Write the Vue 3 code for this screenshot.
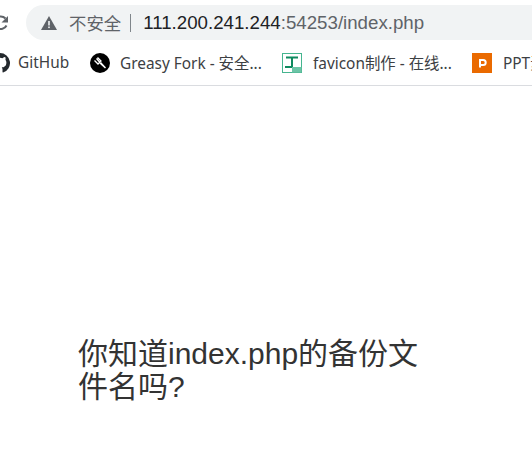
<template>
  <div class="page">
    <div class="toolbar">
      <svg class="reload" width="10" height="18" viewBox="0 0 10 18"><path d="M5.500 4.500A6.300 6.300 0 1 0 6.500 11.500" fill="none" stroke="#5f6368" stroke-width="2"/><path d="M8 2v6.500H1.500z" fill="#5f6368"/></svg>
      <div class="omnibox">
        <svg class="warn" width="16" height="14" viewBox="0 0 16 14"><path d="M8 0 16 14H0z" fill="#5f6368"/><rect x="7.200" y="5" width="1.600" height="4.500" fill="#f1f3f4"/><rect x="7.200" y="10.500" width="1.600" height="1.600" fill="#f1f3f4"/></svg>
        <span class="insecure">不安全</span>
        <span class="sep"></span>
        <span class="url"><span class="host">111.200.241.244</span>:54253/index.php</span>
      </div>
    </div>
    <div class="bookmarks">
      <div class="mark github">
        <svg width="20" height="20" viewBox="0 0 16 16"><path d="M8 0a8 8 0 0 0-2.500 15.600c.4.100.5-.2.5-.4v-1.400c-2.200.5-2.700-1-2.700-1-.4-.9-.9-1.200-.9-1.200-.7-.5.100-.5.100-.5.800.100 1.200.8 1.200.8.700 1.200 1.900.9 2.300.7.100-.5.300-.9.500-1.100-1.800-.2-3.600-.9-3.600-4 0-.9.300-1.600.8-2.100-.1-.2-.4-1 .1-2.100 0 0 .7-.2 2.200.8a7.600 7.600 0 0 1 4 0c1.500-1 2.200-.8 2.200-.8.500 1.100.2 1.900.1 2.100.5.500.8 1.200.8 2.100 0 3.100-1.900 3.800-3.700 4 .3.300.6.800.6 1.500v2.200c0 .2.100.5.500.4A8 8 0 0 0 8 0z" fill="#24292e"/></svg>
        <span>GitHub</span>
      </div>
      <div class="mark fork">
        <svg width="20" height="20" viewBox="0 0 20 20"><circle cx="10" cy="10" r="10" fill="#000"/><path d="M9.500 10.500l1.500-1.500 5 5.500-1 1z" fill="#fff"/><path d="M4.500 7.500l3.500 3.500 3-3-3.500-3.500M6.500 5.500l3 3.500" fill="none" stroke="#fff" stroke-width="1.300"/></svg>
        <span>Greasy Fork - 安全...</span>
      </div>
      <div class="mark favicon">
        <svg width="20" height="20" viewBox="0 0 20 20"><rect x=".5" y=".5" width="19" height="19" fill="#fff" stroke="#45b58f"/><path d="M4 4.500h12M10 4.500v9.500M3 14h8" stroke="#0f8a5f" stroke-width="2" fill="none"/><rect x="10" y="14" width="9.500" height="5.500" fill="#6cc4a6"/></svg>
        <span>favicon制作 - 在线...</span>
      </div>
      <div class="mark ppt">
        <svg width="20" height="20" viewBox="0 0 20 20"><rect width="20" height="20" fill="#ea6a00"/><path d="M8 14.500V7h3.200a2.500 2.500 0 0 1 0 5H9" fill="none" stroke="#fff" stroke-width="2"/></svg>
        <span>PPT素材</span>
      </div>
    </div>
    <div class="content">
      <p class="question">你知道index.php的备份文件名吗?</p>
    </div>
  </div>
</template>

<script setup>
</script>

<style>
html, body { margin: 0; background: #fff; overflow: hidden; }
</style>

<style scoped>
.page {
  width: 532px;
  height: 467px;
  overflow: hidden;
  font-family: "Liberation Sans", "Noto Sans CJK SC", sans-serif;
  color: #333;
}
.toolbar {
  height: 44px;
  display: flex;
  align-items: flex-start;
  padding-top: 5px;
  box-sizing: border-box;
}
.reload { margin-top: 9px; flex: none; }
.omnibox {
  margin-left: 16px;
  flex: 1;
  height: 35px;
  background: #f1f3f4;
  border-radius: 17.5px 0 0 17.5px;
  display: flex;
  align-items: center;
  padding-left: 15px;
  white-space: nowrap;
  font-size: 18.7px;
}
.warn { flex: none; }
.insecure { margin-left: 12px; color: #5f6368; font-size: 17.4px; }
.sep { width: 1px; height: 18px; background: #80868b; margin: 0 12px 0 9px; }
.url { color: #5f6368; }
.host { color: #202124; }
.bookmarks {
  height: 38px;
  padding-bottom: 3px;
  border-bottom: 1px solid #dadce0;
  display: flex;
  align-items: center;
  font-size: 15.4px;
  font-family: "Noto Sans", "Noto Sans CJK SC", sans-serif;
  color: #3c4043;
  white-space: nowrap;
  overflow: hidden;
}
.mark { display: flex; align-items: center; flex: none; }
.mark span { margin-bottom: 2px; }
.github { margin-left: -10px; gap: 8px; }
.github span { width: 72px; }
.fork { gap: 10px; }
.fork span { width: 162px; }
.favicon { gap: 11px; }
.favicon span { width: 159px; }
.ppt { gap: 11px; }
.content { padding: 251px 0 0 78px; }
.question {
  margin: 0;
  width: 345px;
  font-size: 30px;
  line-height: 33px;
  color: #333;
}
</style>
